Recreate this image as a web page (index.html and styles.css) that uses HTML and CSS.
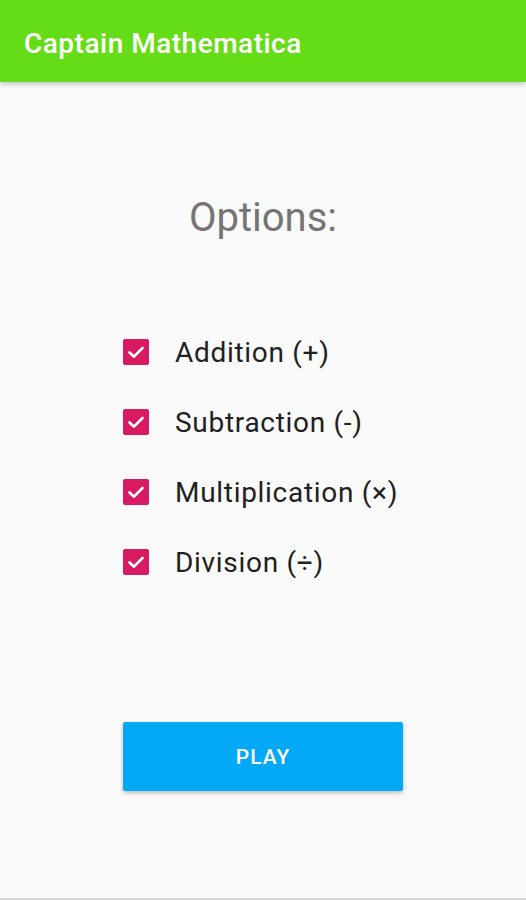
FILE: index.html
```html
<!DOCTYPE html>
<html lang="en">
<head>
    <meta charset="UTF-8">
    <title>Captain Mathematica</title>
    <link rel="stylesheet" href="styles.css">
</head>
<body>

<header class="app-bar">
    <h1 class="app-title">Captain Mathematica</h1>
</header>

<main class="content">
    <h2 class="options-title">Options:</h2>

    <ul class="option-list">
        <li class="option">
            <span class="check">
                <svg viewBox="0 0 26 26" width="26" height="26"><path d="M6.5 13.5l4.5 4.2 8.5-8.7" fill="none" stroke="#fff" stroke-width="2.6" stroke-linecap="round" stroke-linejoin="round"/></svg>
            </span>
            <span class="option-label">Addition (+)</span>
        </li>
        <li class="option">
            <span class="check">
                <svg viewBox="0 0 26 26" width="26" height="26"><path d="M6.5 13.5l4.5 4.2 8.5-8.7" fill="none" stroke="#fff" stroke-width="2.6" stroke-linecap="round" stroke-linejoin="round"/></svg>
            </span>
            <span class="option-label">Subtraction (-)</span>
        </li>
        <li class="option">
            <span class="check">
                <svg viewBox="0 0 26 26" width="26" height="26"><path d="M6.5 13.5l4.5 4.2 8.5-8.7" fill="none" stroke="#fff" stroke-width="2.6" stroke-linecap="round" stroke-linejoin="round"/></svg>
            </span>
            <span class="option-label">Multiplication (×)</span>
        </li>
        <li class="option">
            <span class="check">
                <svg viewBox="0 0 26 26" width="26" height="26"><path d="M6.5 13.5l4.5 4.2 8.5-8.7" fill="none" stroke="#fff" stroke-width="2.6" stroke-linecap="round" stroke-linejoin="round"/></svg>
            </span>
            <span class="option-label">Division (÷)</span>
        </li>
    </ul>

    <button class="play-button">PLAY</button>
</main>

</body>
</html>
```

FILE: styles.css
```css
body {
    margin: 0;
    font-family: Roboto, "Noto Sans", sans-serif;
    background-color: #fafafa;
    height: 900px;
    box-sizing: border-box;
    border-bottom: 2px solid #d6d6d6;
}

.app-bar {
    height: 82px;
    background-color: #64dd17;
    display: flex;
    align-items: center;
    padding-left: 24px;
    box-shadow: 0 2px 5px rgba(0, 0, 0, 0.22);
}

.app-title {
    margin: 0;
    color: #fff;
    font-size: 28px;
    font-weight: 500;
    letter-spacing: 0.5px;
    padding-top: 4px;
}

.content {
    width: 280px;
    margin: 0 auto;
}

.options-title {
    margin: 112px 0 0;
    text-align: center;
    font-size: 40px;
    font-weight: 400;
    line-height: 48px;
    color: #757575;
}

.option-list {
    list-style: none;
    margin: 75px 0 0;
    padding: 0;
}

.option {
    height: 70px;
    display: flex;
    align-items: center;
    gap: 26px;
}

.check {
    width: 26px;
    height: 26px;
    border-radius: 2px;
    background-color: #d81b60;
    display: flex;
}

.option-label {
    font-size: 28px;
    letter-spacing: 0.7px;
    color: #212121;
}

.play-button {
    display: block;
    margin-top: 125px;
    width: 280px;
    height: 69px;
    border: none;
    border-radius: 2px;
    background-color: #03a9f4;
    color: #fff;
    font-family: Roboto, "Noto Sans", sans-serif;
    font-size: 21px;
    font-weight: 500;
    letter-spacing: 1px;
    box-shadow: 0 2px 4px rgba(0, 0, 0, 0.25);
}
```
